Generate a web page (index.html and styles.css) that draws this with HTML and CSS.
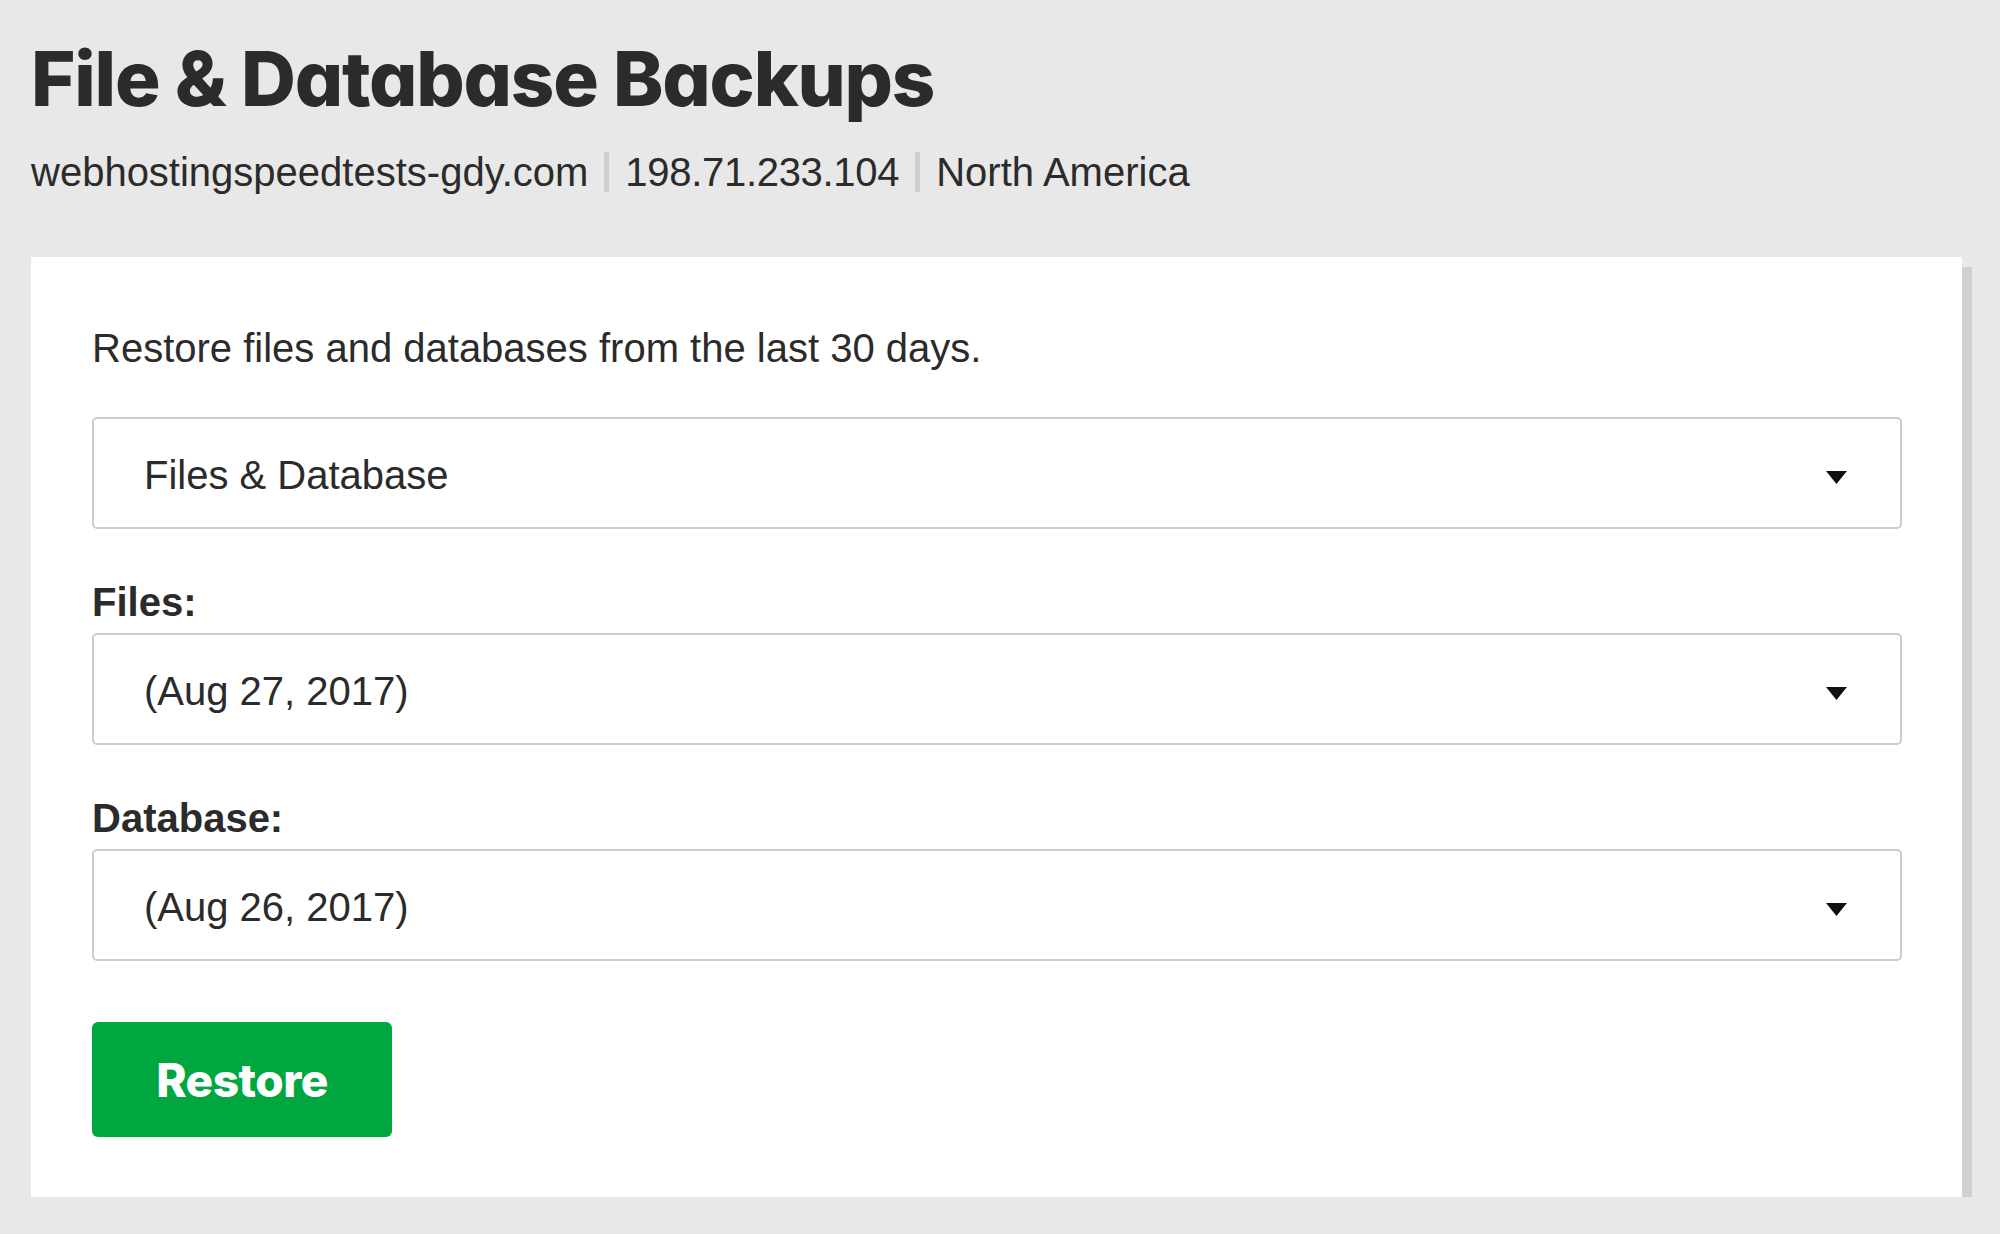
FILE: index.html
```html
<!DOCTYPE html>
<html lang="en">
<head>
<meta charset="utf-8">
<title>File &amp; Database Backups</title>
<link rel="stylesheet" href="styles.css">
</head>
<body>
<div class="page">
  <h1 class="title">File &amp; Database Backups</h1>
  <div class="meta">
    <span class="meta-item">webhostingspeedtests-gdy.com</span>
    <span class="sep"></span>
    <span class="meta-item ip">198.71.233.104</span>
    <span class="sep"></span>
    <span class="meta-item">North America</span>
  </div>
  <div class="card-wrap">
    <div class="card">
      <p class="intro">Restore files and databases from the last 30 days.</p>
      <div class="select first">
        <span class="select-value">Files &amp; Database</span>
        <svg class="caret" width="21" height="13" viewBox="0 0 21 13"><path d="M0 0H21L10.5 13Z" fill="#111"/></svg>
      </div>
      <div class="label">Files:</div>
      <div class="select">
        <span class="select-value">(Aug 27, 2017)</span>
        <svg class="caret" width="21" height="13" viewBox="0 0 21 13"><path d="M0 0H21L10.5 13Z" fill="#111"/></svg>
      </div>
      <div class="label">Database:</div>
      <div class="select">
        <span class="select-value">(Aug 26, 2017)</span>
        <svg class="caret" width="21" height="13" viewBox="0 0 21 13"><path d="M0 0H21L10.5 13Z" fill="#111"/></svg>
      </div>
      <button class="restore" type="button">Restore</button>
    </div>
  </div>
</div>
</body>
</html>
```
FILE: styles.css
```css
html, body {
  margin: 0;
  padding: 0;
  background: #e8e8e8;
}
body {
  font-family: "Liberation Sans", Arial, sans-serif;
  color: #2b2b2b;
}
.page {
  padding: 32px 38px 27px 31px;
}
.title {
  margin: 0;
  font-family: Inter, "Liberation Sans", sans-serif;
  font-weight: 800;
  font-size: 76px;
  line-height: 92px;
  letter-spacing: -1.2px;
  font-feature-settings: "cv11" 1;
  color: #2b2b2b;
}
.meta {
  margin-top: 25px;
  display: flex;
  align-items: center;
  font-size: 40px;
  line-height: 46px;
}
.meta-item.ip {
  letter-spacing: -0.3px;
}
.sep {
  width: 5px;
  height: 40px;
  background: #cfcfcf;
  margin: 0 16px;
}
.card-wrap {
  margin-top: 62px;
  margin-right: -10px;
  padding: 10px 0 0 10px;
  background: #d0d0d0;
  background-clip: content-box;
  position: relative;
}
.card {
  margin: -10px 10px 10px -10px;
  background: #fff;
  padding: 68px 60px 60px 61px;
}
.intro {
  margin: 0;
  font-size: 40px;
  line-height: 46px;
}
.select {
  margin-top: 8px;
  height: 112px;
  box-sizing: border-box;
  border: 2px solid #cccccc;
  border-radius: 5px;
  display: flex;
  align-items: center;
  padding: 0 53px 0 50px;
  font-size: 40px;
  line-height: 46px;
}
.select.first {
  margin-top: 46px;
}
.select-value {
  flex: 1;
  padding-top: 4px;
}
.caret {
  display: block;
  margin-top: 8px;
}
.label {
  margin-top: 50px;
  font-size: 40px;
  line-height: 46px;
  font-weight: 700;
}
.restore {
  display: block;
  margin-top: 61px;
  width: 300px;
  height: 115px;
  border: 0;
  border-radius: 6px;
  background: #00a63f;
  color: #fff;
  font-family: Inter, "Liberation Sans", sans-serif;
  font-weight: 800;
  font-size: 46px;
  letter-spacing: -0.5px;
  padding: 0;
}
```
